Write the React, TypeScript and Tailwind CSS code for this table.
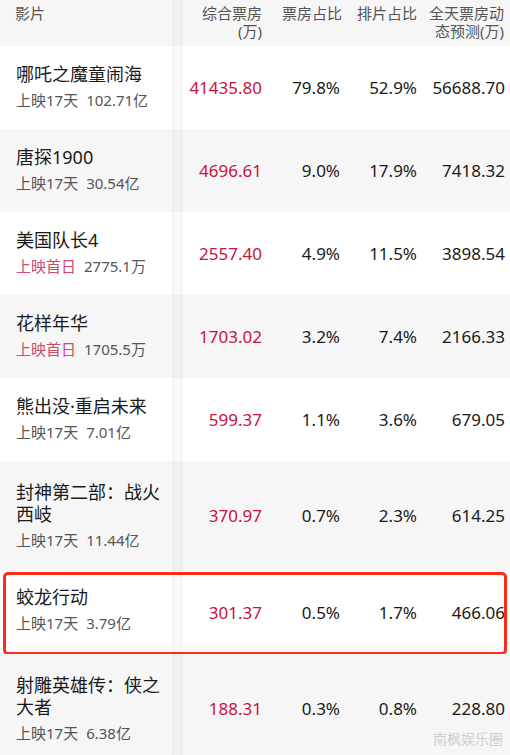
const rows = [
  { name: ['哪吒之魔童闹海'], tag: '上映17天', tagRed: false, total: '102.71亿', box: '41435.80', boxPct: '79.8%', showPct: '52.9%', forecast: '56688.70' },
  { name: ['唐探1900'], tag: '上映17天', tagRed: false, total: '30.54亿', box: '4696.61', boxPct: '9.0%', showPct: '17.9%', forecast: '7418.32' },
  { name: ['美国队长4'], tag: '上映首日', tagRed: true, total: '2775.1万', box: '2557.40', boxPct: '4.9%', showPct: '11.5%', forecast: '3898.54' },
  { name: ['花样年华'], tag: '上映首日', tagRed: true, total: '1705.5万', box: '1703.02', boxPct: '3.2%', showPct: '7.4%', forecast: '2166.33' },
  { name: ['熊出没·重启未来'], tag: '上映17天', tagRed: false, total: '7.01亿', box: '599.37', boxPct: '1.1%', showPct: '3.6%', forecast: '679.05' },
  { name: ['封神第二部：战火', '西岐'], tag: '上映17天', tagRed: false, total: '11.44亿', box: '370.97', boxPct: '0.7%', showPct: '2.3%', forecast: '614.25' },
  { name: ['蛟龙行动'], tag: '上映17天', tagRed: false, total: '3.79亿', box: '301.37', boxPct: '0.5%', showPct: '1.7%', forecast: '466.06', marked: true },
  { name: ['射雕英雄传：侠之', '大者'], tag: '上映17天', tagRed: false, total: '6.38亿', box: '188.31', boxPct: '0.3%', showPct: '0.8%', forecast: '228.80' },
]

const font = { fontFamily: '"Noto Sans", "Noto Sans CJK SC", sans-serif' }

function Strip() {
  return <div className="w-[11px] shrink-0 self-stretch bg-gradient-to-r from-black/[0.045] via-black/[0.02] to-black/[0.035]" />
}

export default function App() {
  return (
    <div className="relative h-[755px] w-[510px] overflow-hidden bg-white" style={font}>
      {/* header */}
      <div className="flex h-[46px] bg-[#f6f6f6] text-[15px] leading-[18px] text-[#555]">
        <div className="w-[172px] shrink-0 pl-[15px] pt-[4px]">影片</div>
        <Strip />
        <div className="w-[83px] shrink-0 pr-[4px] pt-[4px] text-right">
          综合票房
          <br />
          (万)
        </div>
        <div className="w-[80px] shrink-0 pr-[4px] pt-[4px] text-right">票房占比</div>
        <div className="w-[75px] shrink-0 pr-[4px] pt-[4px] text-right">排片占比</div>
        <div className="w-[89px] shrink-0 pr-[6px] pt-[4px] text-right">
          全天票房动
          <br />
          态预测(万)
        </div>
      </div>

      {rows.map((r, i) => (
        <div
          key={r.box}
          className={`relative flex ${r.name.length > 1 ? 'h-[110px]' : 'h-[83px]'} ${i % 2 === 0 ? 'bg-white' : 'bg-[#f6f6f6]'}`}
        >
          <div className={`flex w-[172px] shrink-0 flex-col justify-center pl-[16px] ${r.marked ? 'pb-[6px]' : 'pb-[2px]'}`}>
            <div className="text-[18px] leading-[22px] text-[#1a1a1a]">
              {r.name.map((n) => (
                <div key={n}>{n}</div>
              ))}
            </div>
            <div className="mt-[5px] text-[15px] leading-[20px] text-[#555]">
              <span className={r.tagRed ? 'text-[#cf4a6b]' : ''}>{r.tag}</span>
              <span className="ml-[8px]">{r.total}</span>
            </div>
          </div>
          <Strip />
          <div className="flex w-[83px] shrink-0 items-center justify-end pr-[4px] text-[17px] text-[#c8123a]">{r.box}</div>
          <div className="flex w-[80px] shrink-0 items-center justify-end pr-[6px] text-[17px] text-[#1a1a1a]">{r.boxPct}</div>
          <div className="flex w-[75px] shrink-0 items-center justify-end pr-[4px] text-[17px] text-[#1a1a1a]">{r.showPct}</div>
          <div className="flex w-[89px] shrink-0 items-center justify-end pr-[5px] text-[17px] text-[#1a1a1a]">{r.forecast}</div>
          {r.marked ? (
            <div className="pointer-events-none absolute bottom-[-1px] left-[3px] right-[3px] top-[1px] rounded-[5px] border-[3px] border-[#ff2a1c]" />
          ) : null}
        </div>
      ))}

      <div className="absolute bottom-[8px] right-[7px] text-[14px] leading-[16px] text-[#cfcfcf]">南枫娱乐圈</div>
    </div>
  )
}
